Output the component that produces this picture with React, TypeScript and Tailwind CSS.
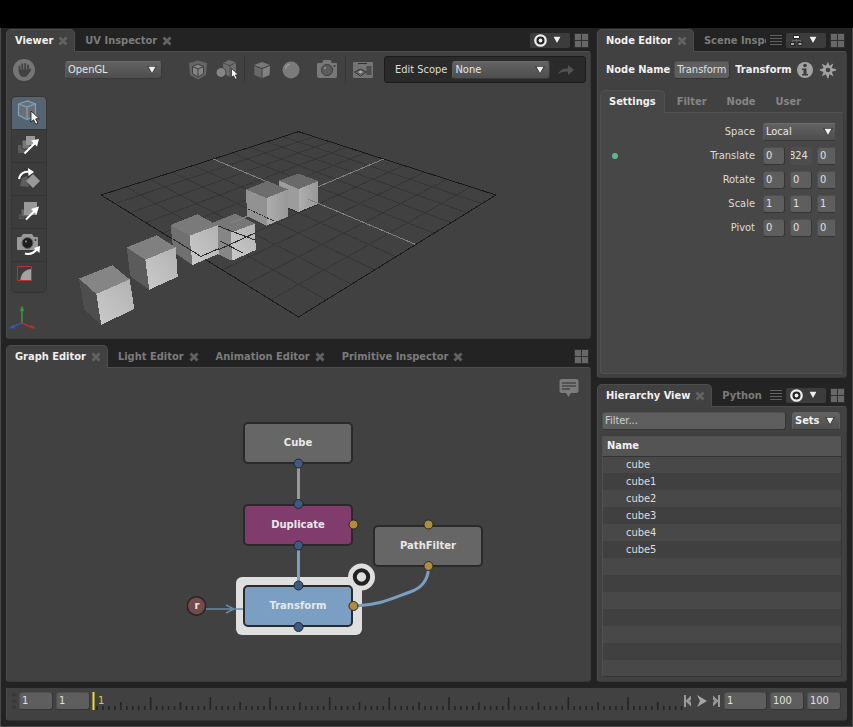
import React from 'react';
import clsx from 'clsx';

type Point = [number, number];

// Shared styles
const fieldStyle =
  'h-[18px] min-w-0 rounded-[3px] border border-[#4e4e4e] border-b-[#353535] border-r-[#353535] bg-[#5e5e5e] px-[2px] pb-[2px] text-[#e0e0e0] outline-none placeholder:text-[#d0d0d0]';

const TriangleIcon = ({ className = '' }: { className?: string }) => (
  <svg className={className} width="10" height="8" viewBox="0 0 10 8" aria-hidden="true">
    <path d="M0 0h10L5 8z" fill="#333" />
    <path d="M1.500 .8h7L5 7z" fill="#eee" />
  </svg>
);

const CloseIcon = () => (
  <svg width="10" height="10" viewBox="0 0 10 10" aria-hidden="true">
    <path d="M1.500 1.500l7 7M8.500 1.500l-7 7" stroke="#626262" strokeWidth="2.800" />
  </svg>
);

const LayoutIcon = () => (
  <svg width="15" height="15" viewBox="0 0 15 15" aria-hidden="true">
    <path d="M0 0h15v15H0z" fill="#303030" />
    <path d="M1 1h6v6H1zM8 1h6v6H8zM1 8h6v6H1zM8 8h6v6H8z" fill="#676767" />
  </svg>
);

const TargetIcon = () => (
  <svg width="13" height="13" viewBox="0 0 13 13" aria-hidden="true">
    <circle cx="6.500" cy="6.500" r="5.200" fill="#222" stroke="#eee" strokeWidth="2.300" />
    <circle cx="6.500" cy="6.500" r="1.900" fill="#eee" />
  </svg>
);

const NodeSetIcon = () => (
  <svg width="13" height="13" viewBox="0 0 13 13" aria-hidden="true">
    <path d="M6.500 4v4M2.500 8.500V6.500h8v2" fill="none" stroke="#666" />
    <path d="M3.500 1.500h6v3h-6z" fill="#eee" stroke="#222" />
    <path d="M.5 8.500h4v3h-4zM8 8.500h4v3H8z" fill="#aaa" stroke="#222" />
  </svg>
);

const MenuIcon = () => (
  <svg width="12" height="12" viewBox="0 0 12 12" aria-hidden="true">
    <path d="M0 1.500h12M0 4.500h12M0 7.500h12M0 10.500h12" stroke="#636363" />
  </svg>
);

const MousePointer = ({ x, y, s = 1 }: { x: number; y: number; s?: number }) => (
  <path
    transform={`translate(${x} ${y}) scale(${s})`}
    d="M0 0v10l2.300-2 2 4 2-1-2-3.800 3.200-.3z"
    fill="#f4f4f4"
    stroke="#222"
    strokeWidth=".8"
  />
);

interface PaneProps {
  tabs: string[];
  icon?: 'target' | 'nodes';
  menu?: boolean;
  className?: string;
  bodyClass?: string;
  children: React.ReactNode;
}

function Pane({ tabs, icon, menu, className, bodyClass, children }: PaneProps) {
  return (
    <section className={clsx('flex min-h-0 min-w-0 flex-col', className)}>
      <header className="flex h-[22px] items-center">
        <div role="tablist" className="flex min-w-0 flex-1 gap-px self-stretch">
          {tabs.map((tab, i) => (
            <div
              key={tab}
              className={clsx(
                'relative flex items-center gap-[5px] border border-b-0 pl-2 font-bold',
                i === 0
                  ? 'z-10 -mb-px shrink-0 rounded-t-[5px] border-[#4d4d4d] bg-[#414141] pb-px text-[#f0f0f0]'
                  : 'border-transparent text-[#7b7b7b]',
                menu && i > 0 ? 'min-w-0 overflow-hidden' : 'shrink-0 pr-1.5'
              )}
            >
              <button role="tab" aria-selected={i === 0} className="shrink-0 whitespace-nowrap">{tab}</button>
              {!(menu && i > 0) && (
                <button aria-label={`Close ${tab}`}><CloseIcon /></button>
              )}
            </div>
          ))}
        </div>
        <div className="flex shrink-0 items-center gap-1 pr-[2px]">
          {menu && <button aria-label="All tabs" className="ml-[3px]"><MenuIcon /></button>}
          {icon && (
            <button aria-label="Pinning" className="flex h-[15px] w-10 items-center gap-[5px] rounded-[2px] bg-[#3c3c3c] pl-1">
              {icon === 'target' ? <TargetIcon /> : <NodeSetIcon />}
              <TriangleIcon />
            </button>
          )}
          <button aria-label="Layout"><LayoutIcon /></button>
        </div>
      </header>
      <div className={clsx('relative min-h-0 flex-1 rounded-b-[3px] rounded-tr-[3px] border border-[#4d4d4d] border-b-[#393939] border-r-[#393939] bg-[#414141]', bodyClass)}>
        {children}
      </div>
    </section>
  );
}

function Select({ label, options, className, clipped }: { label: string; options: string[]; className?: string; clipped?: boolean }) {
  return (
    <span className={clsx('relative block', className)}>
      <select
        aria-label={label}
        className={clsx(
          'block h-[18px] w-full appearance-none border border-b-[#393939] border-l-[#5c5c5c] border-r-[#393939] border-t-[#6a6a6a] bg-linear-to-b from-[#626262] to-[#4e4e4e] pl-[2px] text-[#e6e6e6] outline-none',
          clipped ? 'rounded-l-[3px] border-r-0' : 'rounded-[3px]'
        )}
      >
        {options.map((o) => <option key={o}>{o}</option>)}
      </select>
      <TriangleIcon className={clsx('pointer-events-none absolute top-[5px]', clipped ? 'right-[2px]' : 'right-[5px]')} />
    </span>
  );
}

// Ground plane, seen in perspective. u and v run from -1 to 1.
const project = (u: number, v: number): Point => {
  const side = (u - v) / 2;
  const depth = (u + v) / 2;
  const w = 1 - 0.3168 * depth;
  return [298.5 + (197.4 * side) / w, 195 + (83.35 * depth) / w];
};

const gridSteps = [-0.8, -0.6, -0.4, -0.2, 0.2, 0.4, 0.6, 0.8];

const GridLine = ({ from, to, stroke }: { from: Point; to: Point; stroke: string }) => {
  const [x1, y1] = project(...from);
  const [x2, y2] = project(...to);
  return <line x1={x1} y1={y1} x2={x2} y2={y2} stroke={stroke} />;
};

// Corners: left, back, right, front of the top, then left, front, right of the base
const cubes: { pts: Point[]; top: string; left: string }[] = [
  { pts: [[279, 180.5], [298.5, 173.5], [318.5, 181], [298.5, 189], [280, 204], [298.5, 212.5], [318, 205]], top: '#6a6a6a', left: '#9c9c9c' },
  { pts: [[246, 189.5], [267.5, 181], [288, 189.5], [266.5, 198], [247, 216], [266.5, 225.7], [288, 216.7]], top: '#6d6d6d', left: '#929292' },
  { pts: [[212, 223], [235, 213.7], [255, 223.7], [231, 232.7], [213, 252], [232, 260.7], [255.7, 250]], top: '#777', left: '#868686' },
  { pts: [[170.5, 225], [197.5, 214.3], [217.5, 225.3], [189.5, 235.7], [173.5, 252], [192.5, 265], [218.7, 253.7]], top: '#7a7a7a', left: '#707070' },
  { pts: [[126.7, 247.3], [156.7, 235.3], [175.7, 247.3], [145.3, 259.7], [130.3, 276.3], [149.3, 289.7], [177.7, 276.7]], top: '#808080', left: '#5b5b5b' },
  { pts: [[79, 278.7], [112.3, 265.3], [129.7, 279.3], [96.3, 294], [84.3, 309.7], [101.3, 324.7], [134.3, 309]], top: '#858585', left: '#4e4e4e' },
];

const poly = (pts: Point[], order: number[]) => order.map((i) => pts[i].join(',')).join(' ');

function Scene() {
  return (
    <svg className="pointer-events-none absolute left-0 top-0" width="583" height="286" viewBox="7 52 583 286" aria-hidden="true">
      <defs>
        <linearGradient id="face" x1="0" y1="1" x2="1" y2="0">
          <stop offset="0" stopColor="#cacaca" />
          <stop offset="1" stopColor="#b2b2b2" />
        </linearGradient>
        <linearGradient id="faceFar">
          <stop offset="0" stopColor="#aeaeae" />
          <stop offset="1" stopColor="#989898" />
        </linearGradient>
      </defs>
      <g shapeRendering="crispEdges">
        {gridSteps.map((t) => (
          <g key={t}>
            <GridLine from={[t, -1]} to={[t, 1]} stroke="#363636" />
            <GridLine from={[-1, t]} to={[1, t]} stroke="#363636" />
          </g>
        ))}
        <GridLine from={[0, -1]} to={[0, 1]} stroke="#808080" />
        <GridLine from={[-1, 0]} to={[1, 0]} stroke="#808080" />
        <polygon
          points={[project(-1, -1), project(1, -1), project(1, 1), project(-1, 1)].map((p) => p.join(',')).join(' ')}
          fill="none"
          stroke="#1a1a1a"
        />
      </g>
      {cubes.map(({ pts, top, left }, i) => (
        <g key={i} shapeRendering="crispEdges">
          <polygon points={poly(pts, [0, 1, 2, 3])} fill={top} />
          <polygon points={poly(pts, [0, 3, 5, 4])} fill={left} />
          <polygon points={poly(pts, [3, 2, 6, 5])} fill={i < 2 ? 'url(#faceFar)' : 'url(#face)'} />
        </g>
      ))}
      {/* parts of the grid that pass in front of the cubes */}
      <g fill="none" stroke="#2c2c2c" shapeRendering="crispEdges">
        <path d="M173 239l28 17.500M201 256.500l18-8M218 250l37-17M218 226l37 14M220 241l23 12" />
        <path d="M248 209l26 12" strokeDasharray="2 1" />
        <path d="M288 208l10.500 4.500 19.500-8" />
        <path d="M308 199l10 4.500" stroke="#858585" />
        <path d="M231 223l17-7" stroke="#858585" />
      </g>
      {/* orientation gizmo */}
      <g strokeWidth="1.600">
        <path d="M22 323v-13" stroke="#37943a" />
        <path d="M20 311l2-5 2 5z" fill="#37943a" stroke="#37943a" strokeWidth=".5" />
        <path d="M22 323l9 4" stroke="#b32f2f" />
        <path d="M31 324.500l5 4-6.500-.3z" fill="#b32f2f" />
        <path d="M22 323l-9 3.500" stroke="#3455b5" />
        <path d="M14 324.500l-6 4 7-.3z" fill="#3455b5" />
      </g>
    </svg>
  );
}

const ToolIcon = ({ name }: { name: string }) => (
  <svg width="26" height="26" viewBox="0 0 26 26" aria-hidden="true">
    {name === 'Selection' && (
      <g>
        <path d="M2.500 4l9-3 8 3v11.500l-8.500 4-8.500-4.500z" fill="#6e6e6e" stroke="#7aa0c4" strokeWidth="1.300" />
        <path d="M2.500 4l8.500 3 8.500-3M11 7v13" fill="none" stroke="#7aa0c4" strokeWidth="1.300" />
        <MousePointer x={15} y={11} s={1.1} />
      </g>
    )}
    {name === 'Translate' && (
      <g>
        <path d="M2 12h8v8H2z" fill="#5c5c5c" />
        <path d="M6 7h8v9H6z" fill="#777" stroke="#3d3d3d" />
        <path d="M10 3h9v9h-9z" fill="#999" />
        <path d="M8.500 20.500L19 10" stroke="#fff" strokeWidth="2" />
        <path d="M15 7.500l8-1.500-2 7.500z" fill="#fff" />
      </g>
    )}
    {name === 'Rotate' && (
      <g>
        <path d="M6 12l5-2 2 11-9-1z" fill="#5e5e5e" />
        <path d="M17 8l7 7-7 7-7-7z" fill="#999" />
        <path d="M3 13c1-6 6-8 11-7" fill="none" stroke="#fff" strokeWidth="2" />
        <path d="M12 2l6 4-5.500 4z" fill="#fff" />
      </g>
    )}
    {name === 'Scale' && (
      <g>
        <path d="M3 15h5v5H3z" fill="#555" />
        <path d="M5 10h9v8H5z" fill="#686868" stroke="#3d3d3d" />
        <path d="M8 3h13v13H8z" fill="#999" />
        <path d="M10 20.500l9-9" stroke="#fff" strokeWidth="2" />
        <path d="M15 10l8-2.500-2.500 8z" fill="#fff" />
      </g>
    )}
    {name === 'Camera' && (
      <g>
        <path d="M1 6q0-1 1-1h3l2-3h9l2 3h3q1 0 1 1v11q0 1-1 1H2q-1 0-1-1z" fill="#999" />
        <circle cx="11.500" cy="11" r="5.500" fill="#1e1e1e" stroke="#666" />
        <circle cx="10" cy="9.500" r="1" fill="#999" />
        <circle cx="19.500" cy="8" r="1" fill="#3e3e3e" />
        <path d="M9 21.500c5 1.500 9-.5 12-4.500" fill="none" stroke="#fff" strokeWidth="2.200" />
        <path d="M18 16l6-2-.5 7z" fill="#fff" />
      </g>
    )}
    {name === 'Crop Window' && (
      <g>
        <path d="M4.500 15c0-6 4.500-11 11-11v11z" fill="#a2a2a2" />
        <path d="M1.500 1.500h14v14h-14z" fill="none" stroke="#b63434" />
      </g>
    )}
  </svg>
);

const tools = ['Selection', 'Translate', 'Rotate', 'Scale', 'Camera', 'Crop Window'];

const Divider = () => <span className="h-[27px] w-px bg-[#363636]" />;

function Viewer() {
  return (
    <Pane tabs={['Viewer', 'UV Inspector']} icon="target" className="flex-[310]" bodyClass="overflow-hidden">
      <Scene />
      <div className="relative flex h-[35px] items-center pl-[5px] pr-1">
        <button aria-label="Pause viewer" className="mr-[29px]">
          <svg width="24" height="24" viewBox="0 0 24 24">
            <circle cx="12" cy="12" r="11" fill="#757575" />
            <path d="M7.500 12V8.500M10.300 12V6.200M13.200 12V6M16 12.500V7.500M18.300 11.500l-2.500 4" stroke="#424242" strokeWidth="1.800" strokeLinecap="round" />
            <path d="M6.600 11.500h10.300c0 4-1.500 7.500-4.900 7.500s-5.400-2.500-5.400-7.500z" fill="#424242" />
          </svg>
        </button>
        <Select label="Renderer" options={['OpenGL', 'Arnold', 'Cycles']} className="w-[97px]" />
        <div className="ml-[25px] flex items-center gap-[6px]">
          <button aria-label="Drawing mode">
            <svg width="22" height="22" viewBox="0 0 22 22">
              <path d="M2 4l9-2.500L20 4l-1 12-8 4.500L3 16z" fill="#656565" />
              <path d="M5.500 7.500L11 5l5.500 2.500v7L11 18l-5.500-3.500z" fill="#858585" stroke="#3e3e3e" />
              <path d="M5.500 7.500L11 10l5.500-2.500M11 10v8" fill="none" stroke="#3e3e3e" />
            </svg>
          </button>
          <button aria-label="Selection mask">
            <svg width="24" height="22" viewBox="0 0 24 22">
              <path d="M8 4l6-3 7 2.500V14l-6 4-7-4z" fill="#6e6e6e" />
              <path d="M8 4l7 2.500 6-3M15 6.500V18" fill="none" stroke="#4a4a4a" />
              <circle cx="6" cy="13.500" r="5" fill="#858585" stroke="#3e3e3e" />
              <MousePointer x={16.5} y={9.5} s={0.9} />
            </svg>
          </button>
        </div>
        <div className="ml-[5px] flex items-center gap-[7px]">
          <Divider />
          <button aria-label="Visualisers">
            <svg width="20" height="20" viewBox="0 0 20 20">
              <path d="M2 5l8-3 8 3-8 3z" fill="#777" />
              <path d="M2 6l7.500 3v9L2.500 15z" fill="#686868" />
              <path d="M18 6l-7.500 3v9l7-3z" fill="#828282" />
            </svg>
          </button>
          <button aria-label="Shading mode" className="ml-0.5">
            <svg width="20" height="20" viewBox="0 0 20 20">
              <circle cx="10" cy="10" r="8.500" fill="#7b7b7b" />
              <path d="M4.500 9C5 6 7 4.500 9 4.500" fill="none" stroke="#999" strokeWidth="1.300" />
            </svg>
          </button>
          <span className="ml-[3px]"><Divider /></span>
        </div>
        <button aria-label="Camera" className="ml-[5px]">
          <svg width="22" height="22" viewBox="0 0 22 22">
            <path d="M1 5q0-1 1-1h4l1.500-3h7L16 4h4q1 0 1 1v12q0 2-2 2H3q-2 0-2-2z" fill="#787878" />
            <circle cx="11" cy="11" r="5.500" fill="#5c5c5c" stroke="#3e3e3e" />
            <circle cx="9" cy="9" r="1" fill="#999" />
            <circle cx="18.500" cy="7" r="1" fill="#3e3e3e" />
          </svg>
        </button>
        <span className="ml-[7px] flex items-center gap-[7px]">
          <Divider />
          <button aria-label="Camera gate">
            <svg width="20" height="18" viewBox="0 0 20 18">
              <rect width="20" height="16" y="1" rx="1" fill="#747474" />
              <path d="M5 2.500h9" stroke="#333" />
              <path d="M1.500 11l6-3 6 3-6 4z" fill="none" stroke="#333" />
              <path d="M4 11l3.500-2 3.500 2-3.500 2z" fill="#aaa" stroke="#333" strokeWidth=".6" />
              <path d="M13.500 5h5v9h-5z" fill="#4d4d4d" />
            </svg>
          </button>
        </span>
        <div className="ml-auto flex h-[27px] w-[202px] items-center rounded-[3px] border border-[#1c1c1c] bg-[#2a2a2a] pl-[10px]">
          <span className="mr-[5px] whitespace-nowrap text-[#dcdcdc]">Edit Scope</span>
          <Select label="Edit scope" options={['None', 'Source']} className="w-[98px]" />
          <button aria-label="Go to edit scope" className="ml-[7px]">
            <svg width="18" height="12" viewBox="0 0 18 12">
              <path d="M1 10C3 6 6 4.500 11 4.500V1l6 5-6 5V7.500C7 7.300 4 8 1 10z" fill="#525252" />
            </svg>
          </button>
        </div>
      </div>
      <div className="relative mt-[9px] ml-1 flex w-9 flex-col gap-px overflow-hidden rounded-[5px] border border-[#353535] bg-[#343434]" role="toolbar">
        {tools.map((tool, i) => (
          <button
            key={tool}
            aria-label={tool}
            className={clsx('flex pl-1 pt-[3px]', i === tools.length - 1 ? 'h-[30px]' : 'h-8', i === 0 ? 'bg-[#566371]' : 'bg-[#3c3c3c]')}
          >
            <ToolIcon name={tool} />
          </button>
        ))}
      </div>
    </Pane>
  );
}

const nodes = [
  { name: 'Cube', place: 'left-[236px] top-[54px]', color: 'bg-[#666]' },
  { name: 'Duplicate', place: 'left-[236px] top-[136px]', color: 'bg-[#803c6d]' },
  { name: 'Transform', place: 'left-[236px] top-[217px]', color: 'bg-[#7a9fc2]' },
  { name: 'PathFilter', place: 'left-[366px] top-[157px]', color: 'bg-[#666]' },
];

const bluePlugs: Point[] = [[298.5, 463.5], [298.5, 504], [298.5, 545.5], [298.5, 585.5], [298.5, 627]];
const amberPlugs: Point[] = [[353.5, 524.5], [353.5, 606], [428.5, 524.5], [428.5, 566]];

function GraphEditor() {
  return (
    <Pane tabs={['Graph Editor', 'Light Editor', 'Animation Editor', 'Primitive Inspector']} className="flex-[337]" bodyClass="overflow-hidden">
      <svg className="absolute left-0 top-0" width="583" height="313" viewBox="7 368 583 313" aria-hidden="true">
        <rect x="236" y="577" width="126" height="58" rx="6" fill="#dfdfdf" />
        <g fill="none">
          <path d="M298.500 466v37" stroke="#999" strokeWidth="3" />
          <path d="M298.500 548v36" stroke="#7a9fc2" strokeWidth="3" />
          <path d="M206 609h38M226 605l8 4-8 4" stroke="#6789a5" strokeWidth="1.400" />
          <path d="M355 606c24-.5 38-8 55-14 12-4 18-13 18.500-24" stroke="#7a9fc2" strokeWidth="3" />
        </g>
        <circle cx="196.500" cy="606" r="9.200" fill="#734b4b" stroke="#242424" strokeWidth="1.500" />
      </svg>
      {nodes.map(({ name, place, color }) => (
        <button key={name} className={clsx('absolute h-[42px] w-[110px] rounded-[5px] border-2 border-[#2a2a2a] font-[DejaVu_Sans,sans-serif] text-[10px] font-bold text-[#e8e8e8]', place, color)}>
          {name}
        </button>
      ))}
      <span className="absolute left-[180px] top-[230px] w-5 text-center font-[DejaVu_Sans,sans-serif] text-[10px] font-bold leading-4 text-[#e8e8e8]">r</span>
      <svg className="pointer-events-none absolute left-0 top-0" width="583" height="313" viewBox="7 368 583 313" aria-hidden="true">
        <g stroke="#262626">
          {bluePlugs.map(([x, y]) => <circle key={y} cx={x} cy={y} r="4.500" fill="#3d5a85" />)}
          {amberPlugs.map(([x, y]) => <circle key={`${x}-${y}`} cx={x} cy={y} r="4.500" fill="#b28d39" />)}
        </g>
        <circle cx="361.500" cy="577" r="13.500" fill="#dfdfdf" />
        <circle cx="361.500" cy="577" r="6.700" fill="#dfdfdf" stroke="#222" strokeWidth="4" />
      </svg>
      <button aria-label="Annotations" className="absolute right-[11px] top-[10px]">
        <svg width="20" height="20" viewBox="0 0 20 20">
          <path d="M3 1h14q2.500 0 2.500 2.500v9q0 2.500-2.500 2.500h-5l-2.500 4L7 15H3Q.5 15 .5 12.500v-9Q.5 1 3 1z" fill="#7b7b7b" />
          <path d="M3 5h14M3 8h14M3 11h8" stroke="#474747" strokeWidth="1.500" />
        </svg>
      </button>
    </Pane>
  );
}

const transformPlugs = [
  { label: 'Translate', values: ['0', '824', '0'], animated: true },
  { label: 'Rotate', values: ['0', '0', '0'] },
  { label: 'Scale', values: ['1', '1', '1'] },
  { label: 'Pivot', values: ['0', '0', '0'] },
];

function NodeEditor() {
  return (
    <Pane tabs={['Node Editor', 'Scene Inspector']} icon="nodes" menu className="flex-[349]" bodyClass="flex flex-col px-[2px] pb-[3px]">
      <div className="flex h-[38px] items-center pb-[2px] pl-[6px] pr-[7px] font-bold text-[#f0f0f0]">
        <label htmlFor="node-name" className="mr-1 whitespace-nowrap">Node Name</label>
        <input id="node-name" defaultValue="Transform" className={clsx(fieldStyle, 'w-14 font-normal')} />
        <span className="ml-[5px]">Transform</span>
        <button aria-label="Node info" className="ml-auto">
          <svg width="18" height="18" viewBox="0 0 18 18">
            <circle cx="9" cy="9" r="8" fill="#a2a2a2" />
            <circle cx="9" cy="4.500" r="1.800" fill="#3d3d3d" />
            <path d="M6 7.500h4.500V13H12v1.500H6V13h1.500V9H6z" fill="#3d3d3d" />
          </svg>
        </button>
        <button aria-label="Node settings" className="ml-[5px]">
          <svg width="18" height="18" viewBox="0 0 18 18">
            <path d="M9 .8l1.400 4 3.900-2.200-1.500 4.300 4.400 1.400v1.200l-4.400 1.300 1.700 4.400-4.200-2L9.600 17.200H8.400l-1.500-4-4.100 2 1.700-4.300L.8 9.600V8.400l3.800-1.300-1.900-4.400 4.300 2z" fill="#a2a2a2" />
            <circle cx="9" cy="9" r="2.300" fill="#414141" />
          </svg>
        </button>
      </div>
      <div role="tablist" className="flex h-[22px] shrink-0 gap-5 font-bold text-[#858585]">
        <button role="tab" aria-selected="true" className="relative z-10 -mr-2 -mb-px rounded-t-[5px] border border-b-0 border-[#505050] bg-[#474747] px-2 text-[#f0f0f0]">
          Settings
        </button>
        {['Filter', 'Node', 'User'].map((t) => <button key={t} role="tab" aria-selected="false" className="pt-px">{t}</button>)}
      </div>
      <div className="min-h-0 flex-1 rounded-b-[3px] rounded-tr-[3px] border border-[#505050] border-r-[#3b3b3b] bg-[#474747] pl-[11px] pr-2 pt-[10px]">
        <div className="mb-[6px] flex items-center justify-end gap-2 text-[#dcdcdc]">
          <span>Space</span>
          <Select label="Space" options={['Local', 'Parent', 'World']} className="w-[72px]" clipped />
        </div>
        <div className="flex flex-col gap-[6px]">
          {transformPlugs.map(({ label, values, animated }) => (
            <div key={label} className="flex h-[18px] items-center text-[#dcdcdc]">
              {animated && <span className="size-[6px] rounded-full bg-[#59b98a]" />}
              <span className="ml-auto mr-2">{label}</span>
              <div className="flex w-[72px] gap-[5px] overflow-hidden">
                {values.map((value, i) => (
                  <input
                    key={i}
                    aria-label={`${label} ${'XYZ'[i]}`}
                    defaultValue={value}
                    className={clsx(fieldStyle, 'w-[22px] shrink-0', value.length > 1 && 'border-transparent! bg-[#4d4d4d]! px-0! -indent-[2px]')}
                  />
                ))}
              </div>
            </div>
          ))}
        </div>
      </div>
    </Pane>
  );
}

const locations = ['cube', 'cube1', 'cube2', 'cube3', 'cube4', 'cube5', '', '', '', '', '', '', ''];

function HierarchyView() {
  return (
    <Pane tabs={['Hierarchy View', 'Python']} icon="target" menu className="flex-[298]" bodyClass="flex flex-col px-1 pb-1 pt-[5px]">
      <div className="mb-[6px] flex gap-[6px] pr-[2px]">
        <input aria-label="Filter" placeholder="Filter..." className={clsx(fieldStyle, 'flex-1')} />
        <button className="flex h-[18px] w-12 items-center justify-between rounded-[3px] border border-[#606060] border-b-[#393939] bg-linear-to-b from-[#626262] to-[#4e4e4e] pl-[2px] pr-1 font-bold text-[#f0f0f0]">
          Sets
          <TriangleIcon />
        </button>
      </div>
      <div className="min-h-0 flex-1 overflow-hidden border border-[#505050] border-b-[#353535] border-r-[#353535]">
        <table className="w-full border-collapse text-left">
          <thead>
            <tr className="h-[19px] border-b border-[#333] bg-[#545454] text-[#f0f0f0]">
              <th className="py-0 pl-1 font-bold">Name</th>
            </tr>
          </thead>
          <tbody>
            {locations.map((name, i) => (
              <tr key={i} className="h-[17px] odd:bg-[#484848] even:bg-[#404040]">
                <td className="py-0 pl-[23px] text-[#dcdcdc]">{name}</td>
              </tr>
            ))}
          </tbody>
        </table>
      </div>
    </Pane>
  );
}

const frames = Array.from({ length: 99 }, (_, i) => i + 1);

function Timeline() {
  return (
    <footer className="mt-[6px] flex h-[33px] shrink-0 items-start rounded-b-[3px] border-b border-l border-[#4d4d4d] border-b-[#333] bg-[#414141] pl-1 pr-[6px] pt-1">
      <svg width="8" height="18" viewBox="0 0 8 18" aria-hidden="true" className="shrink-0">
        <g fill="#383838">
          <circle cx="3" cy="3" r="2" />
          <circle cx="3" cy="9" r="2" />
          <circle cx="3" cy="15" r="2" />
        </g>
      </svg>
      <div className="flex gap-[3px]">
        <input aria-label="Script start" defaultValue="1" className={clsx(fieldStyle, 'w-[34px]')} />
        <input aria-label="Range start" defaultValue="1" className={clsx(fieldStyle, 'w-[34px]')} />
      </div>
      <div className="relative ml-px h-[18px] min-w-0 flex-1">
        <svg className="h-full w-full" aria-hidden="true">
          {frames.map((f) => (
            <line
              key={f}
              x1={`${f / 0.994}%`}
              x2={`${f / 0.994}%`}
              y1={f % 10 === 0 ? 5 : f % 5 === 0 ? 10 : 14}
              y2={18}
              stroke="#242424"
              strokeWidth="1.600"
            />
          ))}
          <path d="M2.500 0v18" stroke="#f5dc28" strokeWidth="2" />
        </svg>
        <span className="absolute left-[7px] top-px leading-4 text-[#e0cb2c]">1</span>
      </div>
      <div className="flex h-[18px] items-center gap-[6px] pr-1">
        <button aria-label="First frame">
          <svg width="7" height="14" viewBox="0 0 7 14"><path d="M1 1v12" stroke="#999" strokeWidth="2" /><path d="M7 1.500v11L1.500 7z" fill="#999" /><path d="M7 5.500v3L5 7z" fill="#555" /></svg>
        </button>
        <button aria-label="Play">
          <svg width="10" height="14" viewBox="0 0 10 14"><path d="M0 1l10 6-10 6 3-6z" fill="#a5a5a5" /></svg>
        </button>
        <button aria-label="Last frame">
          <svg width="7" height="14" viewBox="0 0 7 14"><path d="M6 1v12" stroke="#999" strokeWidth="2" /><path d="M0 1.500v11L5.500 7z" fill="#999" /><path d="M0 5.500v3L2 7z" fill="#555" /></svg>
        </button>
      </div>
      <div className="flex gap-[3px]">
        <input aria-label="Current frame" defaultValue="1" className={clsx(fieldStyle, 'w-[43px]')} />
        <input aria-label="Range end" defaultValue="100" className={clsx(fieldStyle, 'w-[34px]')} />
        <input aria-label="Script end" defaultValue="100" className={clsx(fieldStyle, 'w-[34px]')} />
      </div>
    </footer>
  );
}

function App() {
  return (
    <div className="flex h-screen flex-col bg-black pt-7 font-[DejaVu_Sans_Condensed,DejaVu_Sans,sans-serif] text-[11px] leading-4">
      <main className="flex min-h-0 flex-1 flex-col border border-t-0 border-[#4a4a4a] bg-[#232323] px-[5px] pb-[5px] pt-px">
        <div className="grid min-h-0 flex-1 grid-cols-[585fr_250fr] gap-[6px]">
          <div className="flex min-h-0 min-w-0 flex-col gap-[6px]">
            <Viewer />
            <GraphEditor />
          </div>
          <div className="flex min-h-0 min-w-0 flex-col gap-[6px]">
            <NodeEditor />
            <HierarchyView />
          </div>
        </div>
        <Timeline />
      </main>
    </div>
  );
}

export default App;
